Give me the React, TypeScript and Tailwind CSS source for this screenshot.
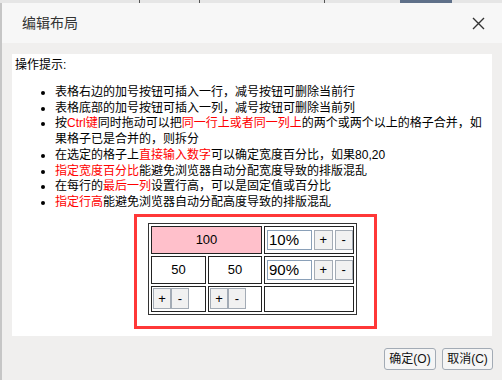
import React from "react";

const font = { fontFamily: '"Liberation Sans", "Noto Sans CJK SC", sans-serif' };

function Red({ children }: { children: React.ReactNode }) {
  return <span className="text-[#ff0000]">{children}</span>;
}

function SmallBtn({ label, className = "" }: { label: string; className?: string }) {
  return (
    <button
      className={
        "flex items-center justify-center border border-[#a3abb5] bg-[#f1f1f1] text-[13px] leading-none text-black " +
        className
      }
    >
      {label}
    </button>
  );
}

function WidthCell({ value }: { value: string }) {
  return (
    <div className="flex items-center gap-[2px] border border-[#222] bg-white pl-[2px]">
      <input
        readOnly
        defaultValue={value}
        style={font}
        className="h-[20px] w-[45px] border border-[#8aa0b8] px-[1px] text-[15px] leading-none text-black outline-none"
      />
      <SmallBtn label="+" className="h-[20px] w-[19px]" />
      <SmallBtn label="-" className="h-[20px] w-[19px]" />
    </div>
  );
}

function ColCell() {
  return (
    <div className="flex items-center border border-[#222] bg-white pl-[1px]">
      <SmallBtn label="+" className="h-[21px] w-[18px]" />
      <SmallBtn label="-" className="h-[21px] w-[18px]" />
    </div>
  );
}

export default function App() {
  return (
    <div style={font} className="h-[380px] w-[502px] overflow-hidden bg-[#f0efee] text-black">
      {/* page behind the dialog */}
      <div className="flex h-[3px] bg-[#e6e6e6]">
        <div className="w-[140px] border-r border-[#555]" />
        <div className="w-[60px] border-r border-[#555]" />
        <div className="w-[125px] border-r border-[#555]" />
        <div className="w-[75px]" />
        <div className="w-[52px] bg-[#5f7089]" />
      </div>
      <div className="flex h-[377px]">
        <div className="w-[2px] bg-[#c6c6c6]" />
        <div className="flex flex-1 flex-col">
          <div className="flex h-[40px] items-center justify-between bg-[#f7f7f7] pl-[20px] pr-[17px]">
            <span className="text-[14px] text-[#333]">编辑布局</span>
            <svg width="13" height="13" viewBox="0 0 13 13" className="text-[#333]">
              <path d="M1 1L12 12M12 1L1 12" stroke="currentColor" strokeWidth="1.4" fill="none" />
            </svg>
          </div>

          <div className="mx-[10px] mt-[11px] h-[282px] bg-white pl-[3px] pt-[3px] text-[12px] leading-[16px]">
            <div>操作提示:</div>
            <ul className="mt-[12px] list-disc pl-[40px] leading-[15.7px]">
              <li>表格右边的加号按钮可插入一行，减号按钮可删除当前行</li>
              <li>表格底部的加号按钮可插入一列，减号按钮可删除当前列</li>
              <li>
                按<Red>Ctrl键</Red>同时拖动可以把<Red>同一行上或者同一列上</Red>的两个或两个以上的格子合并，如
                <br />
                果格子已是合并的，则拆分
              </li>
              <li>
                在选定的格子上<Red>直接输入数字</Red>可以确定宽度百分比，如果80,20
              </li>
              <li>
                <Red>指定宽度百分比</Red>能避免浏览器自动分配宽度导致的排版混乱
              </li>
              <li>
                在每行的<Red>最后一列</Red>设置行高，可以是固定值或百分比
              </li>
              <li>
                <Red>指定行高</Red>能避免浏览器自动分配高度导致的排版混乱
              </li>
            </ul>

            <div className="ml-[119px] mt-[3px] h-[115px] w-[243px] border-[3px] border-[#ff3838] pl-[11px] pt-[6px]">
              <div className="grid w-[209px] grid-cols-[55px_54px_90px] grid-rows-[28px_28px_26px] gap-[2px] border border-[#333] p-[2px] text-[13px]">
                <div className="col-span-2 flex items-center justify-center border border-[#222] bg-[#ffc0cb]">100</div>
                <WidthCell value="10%" />
                <div className="flex items-center justify-center border border-[#222] bg-white">50</div>
                <div className="flex items-center justify-center border border-[#222] bg-white">50</div>
                <WidthCell value="90%" />
                <ColCell />
                <ColCell />
                <div className="border border-[#222] bg-white" />
              </div>
            </div>
          </div>

          <div className="mt-[12px] flex justify-end gap-[6px] pr-[9px]">
            <button className="h-[22px] w-[52px] rounded-[3px] border border-[#a3abb5] bg-[#f5f5f5] text-[12px] text-[#111]">
              确定(O)
            </button>
            <button className="h-[22px] w-[51px] rounded-[3px] border border-[#a3abb5] bg-[#f5f5f5] text-[12px] text-[#111]">
              取消(C)
            </button>
          </div>
        </div>
      </div>
    </div>
  );
}
